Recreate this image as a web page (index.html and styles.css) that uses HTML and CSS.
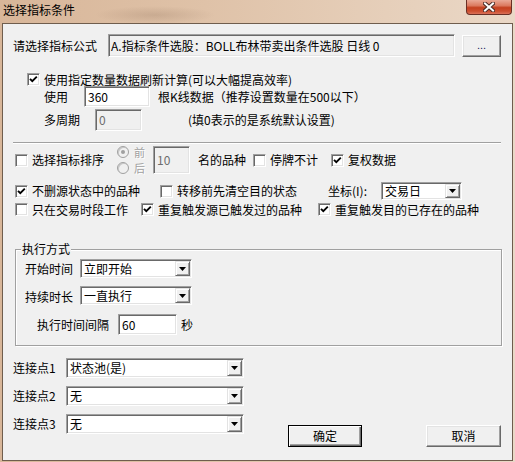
FILE: index.html
```html
<!DOCTYPE html>
<html>
<head>
<meta charset="utf-8">
<title>选择指标条件</title>
<link rel="stylesheet" href="styles.css">
</head>
<body>
<div class="window">
  <div class="titlebar">
    <span class="title">选择指标条件</span>
    <div class="close">
      <svg width="12" height="10" viewBox="0 0 12 10"><path d="M2 1.5 L10 8.5 M10 1.5 L2 8.5" stroke="#4b2b26" stroke-width="4" stroke-linecap="square"/><path d="M2 1.5 L10 8.5 M10 1.5 L2 8.5" stroke="#ffffff" stroke-width="2" stroke-linecap="square"/></svg>
    </div>
  </div>
  <div class="client">
    <div class="row r1">
      <span class="cell w95">请选择指标公式</span>
      <div class="edit ro formula">A.指标条件选股：BOLL布林带卖出条件选股 日线 0</div>
      <div class="btn dots">...</div>
    </div>

    <div class="row r2">
      <span class="cb on"><svg width="11" height="11" viewBox="0 0 11 11"><path d="M2 4.8 L4.3 7.2 L8.8 2.7" fill="none" stroke="#000" stroke-width="1.9"/></svg></span>
      <span class="cbtext">使用指定数量数据刷新计算(可以大幅提高效率)</span>
    </div>

    <div class="row r3">
      <span class="cell w40">使用</span>
      <div class="edit w66">360</div>
      <span class="after8">根K线数据（推荐设置数量在500以下）</span>
    </div>

    <div class="row r4">
      <span class="cell w51">多周期</span>
      <div class="edit dis w47">0</div>
      <span class="after46">(填0表示的是系统默认设置)</span>
    </div>

    <div class="sep"></div>

    <div class="row r6">
      <div class="cell w102 chk">
        <span class="cb"></span><span class="cbtext">选择指标排序</span>
      </div>
      <div class="radios">
        <div class="radio-item"><span class="rb sel"><span class="dot"></span></span><span class="distext">前</span></div>
        <div class="radio-item"><span class="rb"></span><span class="distext">后</span></div>
      </div>
      <div class="edit dis w37 h22">10</div>
      <span class="cell w55 after8">名的品种</span>
      <div class="cell w78 chk">
        <span class="cb"></span><span class="cbtext">停牌不计</span>
      </div>
      <div class="cell chk">
        <span class="cb on"><svg width="11" height="11" viewBox="0 0 11 11"><path d="M2 4.8 L4.3 7.2 L8.8 2.7" fill="none" stroke="#000" stroke-width="1.9"/></svg></span><span class="cbtext">复权数据</span>
      </div>
    </div>

    <div class="row r7">
      <div class="cell w145 chk">
        <span class="cb on"><svg width="11" height="11" viewBox="0 0 11 11"><path d="M2 4.8 L4.3 7.2 L8.8 2.7" fill="none" stroke="#000" stroke-width="1.9"/></svg></span><span class="cbtext">不删源状态中的品种</span>
      </div>
      <div class="cell w168 chk">
        <span class="cb"></span><span class="cbtext">转移前先清空目的状态</span>
      </div>
      <span class="cell w53">坐标(I):</span>
      <div class="combo w81 h18">
        <span class="val">交易日</span>
        <span class="arrow"><svg width="7" height="4" viewBox="0 0 7 4"><path d="M0 0 H7 L3.5 4 Z" fill="#000"/></svg></span>
      </div>
    </div>

    <div class="row r8">
      <div class="cell w126 chk">
        <span class="cb"></span><span class="cbtext">只在交易时段工作</span>
      </div>
      <div class="cell w177 chk">
        <span class="cb on"><svg width="11" height="11" viewBox="0 0 11 11"><path d="M2 4.8 L4.3 7.2 L8.8 2.7" fill="none" stroke="#000" stroke-width="1.9"/></svg></span><span class="cbtext">重复触发源已触发过的品种</span>
      </div>
      <div class="cell chk">
        <span class="cb on"><svg width="11" height="11" viewBox="0 0 11 11"><path d="M2 4.8 L4.3 7.2 L8.8 2.7" fill="none" stroke="#000" stroke-width="1.9"/></svg></span><span class="cbtext">重复触发目的已存在的品种</span>
      </div>
    </div>

    <div class="group">
      <div class="legend">执行方式</div>
      <div class="row g1">
        <span class="cell w55">开始时间</span>
        <div class="combo w112 h19">
          <span class="val">立即开始</span>
          <span class="arrow"><svg width="7" height="4" viewBox="0 0 7 4"><path d="M0 0 H7 L3.5 4 Z" fill="#000"/></svg></span>
        </div>
      </div>
      <div class="row g2">
        <span class="cell w55 low">持续时长</span>
        <div class="combo w112 h19">
          <span class="val">一直执行</span>
          <span class="arrow"><svg width="7" height="4" viewBox="0 0 7 4"><path d="M0 0 H7 L3.5 4 Z" fill="#000"/></svg></span>
        </div>
      </div>
      <div class="row g3">
        <span class="cell w81">执行时间间隔</span>
        <div class="edit w59">60</div>
        <span class="after4">秒</span>
      </div>
    </div>

    <div class="bottom">
      <div class="conns">
        <div class="row c1">
          <span class="cell w53">连接点1</span>
          <div class="combo w178 h20">
            <span class="val">状态池(是)</span>
            <span class="arrow"><svg width="7" height="4" viewBox="0 0 7 4"><path d="M0 0 H7 L3.5 4 Z" fill="#000"/></svg></span>
          </div>
        </div>
        <div class="row c2">
          <span class="cell w53">连接点2</span>
          <div class="combo w178 h20">
            <span class="val">无</span>
            <span class="arrow"><svg width="7" height="4" viewBox="0 0 7 4"><path d="M0 0 H7 L3.5 4 Z" fill="#000"/></svg></span>
          </div>
        </div>
        <div class="row c2">
          <span class="cell w53">连接点3</span>
          <div class="combo w178 h20">
            <span class="val">无</span>
            <span class="arrow"><svg width="7" height="4" viewBox="0 0 7 4"><path d="M0 0 H7 L3.5 4 Z" fill="#000"/></svg></span>
          </div>
        </div>
      </div>
      <div class="btn default ok">确定</div>
      <div class="btn cancel">取消</div>
    </div>
  </div>
</div>
</body>
</html>
```

FILE: styles.css
```css
* { box-sizing: border-box; }

body {
  margin: 0;
  font-family: "Noto Sans CJK SC", "Liberation Sans", sans-serif;
  font-size: 12px;
  line-height: 14px;
  color: #000;
  background: #ffffff;
}

.window {
  width: 515px;
  height: 462px;
  display: flex;
  flex-direction: column;
  background:
    radial-gradient(ellipse 60px 9px at 155px 15px, rgba(110, 80, 60, 0.18), rgba(110, 80, 60, 0) 100%),
    linear-gradient(to right, #d8b699 0%, #dfc2a8 40%, #e6cfba 75%, #ead8c7 100%);
}

.titlebar {
  height: 23px;
  display: flex;
  align-items: flex-start;
  flex: none;
}

.title {
  margin: 3px 0 0 3px;
  font-size: 12px;
  line-height: 14px;
  color: #000;
}

.close {
  margin-left: auto;
  margin-right: 3px;
  width: 46px;
  height: 15px;
  border: 1px solid #6a2f25;
  border-top: none;
  border-radius: 0 0 4px 4px;
  background: linear-gradient(to bottom, #eaa996 0%, #dc7a60 40%, #c4401f 55%, #cd4f30 80%, #da7158 100%);
  display: flex;
  align-items: center;
  justify-content: center;
}

.close svg { display: block; margin-top: -1px; }

.client {
  flex: 1;
  margin: 0 2px 1px 2px;
  border: 1px solid #6f5d4d;
  background: #f0f0f0;
  display: flex;
  flex-direction: column;
}

.row {
  display: flex;
  align-items: center;
  flex: none;
}

.cell { flex: none; display: flex; align-items: center; white-space: nowrap; }

.w37 { width: 37px; }
.w40 { width: 40px; }
.w47 { width: 47px; }
.w51 { width: 51px; }
.w53 { width: 53px; }
.w55 { width: 55px; }
.w59 { width: 59px; }
.w66 { width: 66px; }
.w78 { width: 78px; }
.w81 { width: 81px; }
.w95 { width: 95px; }
.w102 { width: 102px; }
.w112 { width: 112px; }
.w126 { width: 126px; }
.w145 { width: 145px; }
.w168 { width: 168px; }
.w177 { width: 177px; }
.w178 { width: 178px; }

.h18 { height: 18px; }
.h19 { height: 19px; }
.h20 { height: 20px; }
.h22 { height: 22px; }

.after4 { margin-left: 4px; white-space: nowrap; }
.after8 { margin-left: 8px; white-space: nowrap; }
.after46 { margin-left: 46px; white-space: nowrap; }

/* sunken edit box */
.edit {
  flex: none;
  height: 100%;
  background: #fff;
  border: 1px solid;
  border-color: #a0a0a0 #ffffff #ffffff #a0a0a0;
  box-shadow: inset 1px 1px 0 #696969, inset -1px -1px 0 #e3e3e3;
  padding: 0 0 0 3px;
  display: flex;
  align-items: center;
  white-space: nowrap;
  overflow: hidden;
}
.edit.ro { background: #f0f0f0; }
.edit.dis { background: #f0f0f0; color: #6d6d6d; }

/* raised button */
.btn {
  flex: none;
  background: #f0f0f0;
  border: 1px solid;
  border-color: #ffffff #696969 #696969 #ffffff;
  box-shadow: inset -1px -1px 0 #a0a0a0, inset 1px 1px 0 #e3e3e3;
  display: flex;
  align-items: center;
  justify-content: center;
  white-space: nowrap;
}

.btn.default {
  border: 1px solid #000;
  box-shadow: inset 1px 1px 0 #ffffff, inset -1px -1px 0 #696969, inset -2px -2px 0 #a0a0a0;
}

/* checkbox */
.cb {
  flex: none;
  width: 13px;
  height: 13px;
  background: #fff;
  border: 1px solid;
  border-color: #a0a0a0 #ffffff #ffffff #a0a0a0;
  box-shadow: inset 1px 1px 0 #696969, inset -1px -1px 0 #e3e3e3;
  display: flex;
  align-items: center;
  justify-content: center;
}
.cb svg { display: block; }
.cbtext { margin-left: 4px; white-space: nowrap; }

/* row 1 */
.r1 {
  margin-top: 10px;
  height: 23px;
  padding-left: 10px;
  align-items: flex-end;
}
.r1 .cell { align-self: center; }
.formula { width: 347px; height: 23px; padding-left: 2px; }
.dots {
  margin-left: 7px;
  width: 39px;
  height: 22px;
  color: #20205a;
  font-family: "Liberation Sans", sans-serif;
  font-size: 11px;
  padding-bottom: 2px;
}

/* row 2 */
.r2 {
  margin-top: 16px;
  height: 13px;
  padding-left: 24px;
}

/* row 3 */
.r3 {
  margin-top: 0;
  height: 21px;
  padding-left: 41px;
}

/* row 4 */
.r4 {
  margin-top: 2px;
  height: 22px;
  padding-left: 41px;
}

.sep {
  flex: none;
  margin: 11px 0 0 10px;
  width: 488px;
  height: 2px;
  border-top: 1px solid #a0a0a0;
  border-bottom: 1px solid #ffffff;
}

/* row 6 */
.r6 {
  margin-top: 2px;
  height: 28px;
  padding-left: 12px;
}
.radios {
  flex: none;
  width: 36px;
  display: flex;
  flex-direction: column;
  gap: 3px;
}
.radio-item {
  height: 13px;
  display: flex;
  align-items: center;
}
.rb {
  flex: none;
  width: 12px;
  height: 12px;
  border-radius: 50%;
  background: #f0f0f0;
  border: 1px solid #a0a0a0;
  box-shadow: inset 1px 1px 0 #c8c8c8;
  display: flex;
  align-items: center;
  justify-content: center;
}
.rb .dot {
  width: 4px;
  height: 4px;
  border-radius: 50%;
  background: #a0a0a0;
}
.distext {
  margin-left: 5px;
  font-size: 11px;
  line-height: 12px;
  color: #a0a0a0;
  text-shadow: 1px 1px 0 #ffffff;
}

/* row 7 */
.r7 {
  margin-top: 8px;
  height: 18px;
  padding-left: 12px;
}

/* row 8 */
.r8 {
  margin-top: 3px;
  height: 13px;
  padding-left: 12px;
}

/* combo box */
.combo {
  flex: none;
  display: flex;
  background: #fff;
  border: 1px solid;
  border-color: #a0a0a0 #ffffff #ffffff #a0a0a0;
  box-shadow: inset 1px 1px 0 #696969, inset -1px -1px 0 #e3e3e3;
  padding: 1px;
}
.combo .val {
  flex: 1;
  display: flex;
  align-items: center;
  padding-left: 2px;
  white-space: nowrap;
}
.combo .arrow {
  flex: none;
  width: 15px;
  background: #f0f0f0;
  border: 1px solid;
  border-color: #e3e3e3 #696969 #696969 #e3e3e3;
  box-shadow: inset 1px 1px 0 #ffffff, inset -1px -1px 0 #a0a0a0;
  display: flex;
  align-items: center;
  justify-content: center;
}
.combo .arrow svg { display: block; }

/* group box */
.group {
  flex: none;
  margin: 33px 0 0 12px;
  width: 487px;
  height: 97px;
  border: 1px solid #a0a0a0;
  box-shadow: 1px 1px 0 #ffffff, inset 1px 1px 0 #ffffff;
}
.legend {
  width: fit-content;
  margin: -8px 0 0 5px;
  padding: 0 1px;
  background: #f0f0f0;
  line-height: 14px;
}
.g1 {
  margin-top: 3px;
  height: 19px;
  padding-left: 9px;
}
.g2 {
  margin-top: 8px;
  height: 19px;
  padding-left: 9px;
}
.low { padding-top: 3px; }
.g3 {
  margin-top: 9px;
  height: 21px;
  padding-left: 21px;
}

/* bottom */
.bottom {
  flex: none;
  margin-top: 12px;
  display: flex;
  align-items: flex-start;
}
.conns {
  flex: none;
  padding-left: 10px;
  display: flex;
  flex-direction: column;
}
.c1 { height: 20px; }
.c2 { height: 20px; margin-top: 8px; }

.ok {
  margin: 67px 0 0 44px;
  width: 74px;
  height: 22px;
}
.cancel {
  margin: 67px 0 0 64px;
  width: 75px;
  height: 22px;
}
```
